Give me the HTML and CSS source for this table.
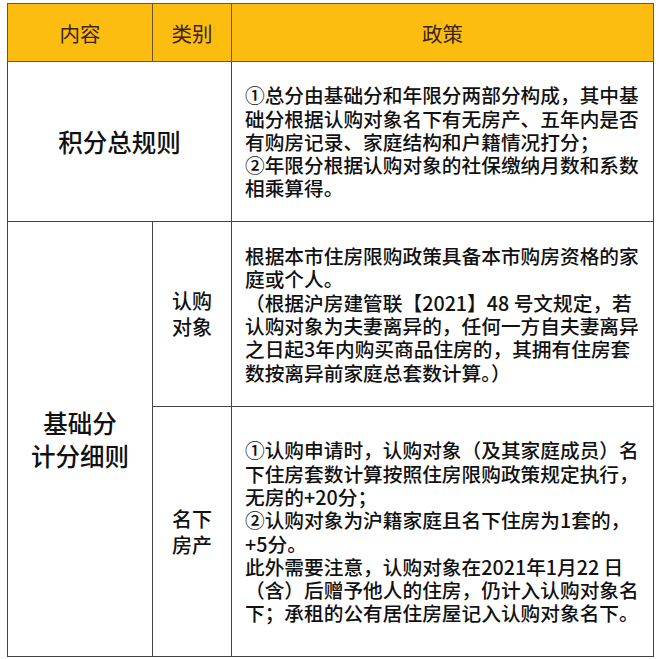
FILE: index.html
```html
<!DOCTYPE html>
<html lang="zh-CN">
<head>
<meta charset="utf-8">
<link rel="stylesheet" href="styles.css">
</head>
<body>
<div class="page">
<table class="policy">
  <colgroup>
    <col class="c1"><col class="c2"><col class="c3">
  </colgroup>
  <thead>
    <tr class="head">
      <th>内容</th>
      <th>类别</th>
      <th>政策</th>
    </tr>
  </thead>
  <tbody>
    <tr class="r1">
      <td colspan="2" class="label big">积分总规则</td>
      <td class="text">①总分由基础分和年限分两部分构成，其中基<br>础分根据认购对象名下有无房产、五年内是否<br>有购房记录、家庭结构和户籍情况打分；<br>②年限分根据认购对象的社保缴纳月数和系数<br>相乘算得。</td>
    </tr>
    <tr class="r2">
      <td rowspan="2" class="label big two">基础分<br>计分细则</td>
      <td class="label small">认购<br>对象</td>
      <td class="text">根据本市住房限购政策具备本市购房资格的家<br>庭或个人。<br>（根据沪房建管联【2021】48 号文规定，若<br>认购对象为夫妻离异的，任何一方自夫妻离异<br>之日起3年内购买商品住房的，其拥有住房套<br>数按离异前家庭总套数计算。）</td>
    </tr>
    <tr class="r3">
      <td class="label small">名下<br>房产</td>
      <td class="text">①认购申请时，认购对象（及其家庭成员）名<br>下住房套数计算按照住房限购政策规定执行，<br>无房的+20分；<br>②认购对象为沪籍家庭且名下住房为1套的，<br>+5分。<br>此外需要注意，认购对象在2021年1月22 日<br>（含）后赠予他人的住房，仍计入认购对象名<br>下；承租的公有居住房屋记入认购对象名下。</td>
    </tr>
  </tbody>
</table>
</div>
</body>
</html>
```

FILE: styles.css
```css
html, body {
  margin: 0;
  padding: 0;
  background: #ffffff;
}
.page {
  padding: 3px 0 0 7px;
}
.policy {
  border-collapse: collapse;
  width: 646px;
  table-layout: fixed;
  font-family: "Noto Sans CJK SC", "Microsoft YaHei", sans-serif;
  color: #111;
}
.c1 { width: 145px; }
.c2 { width: 79px; }
.c3 { width: 422px; }
.policy th,
.policy td {
  border: 1.5px solid #444;
  padding: 0;
}
.head th {
  height: 57px;
  background: #fdbd10;
  color: #3a2414;
  font-weight: 400;
  font-size: 20.5px;
  text-align: center;
  vertical-align: middle;
  border-color: #6b5630;
}
.r1 td { height: 159px; }
.r2 td { height: 184px; }
.r3 td { height: 249px; }
.label {
  text-align: center;
  vertical-align: middle;
  font-weight: 500;
}
.label.big {
  font-size: 24.5px;
  line-height: 33px;
}
.label.small {
  font-size: 20px;
  line-height: 26px;
}
.text {
  font-size: 19.7px;
  line-height: 23.3px;
  font-weight: 500;
  padding: 0 0 0 13px !important;
  white-space: nowrap;
  vertical-align: middle;
  text-align: left;
  letter-spacing: 0;
}
```
